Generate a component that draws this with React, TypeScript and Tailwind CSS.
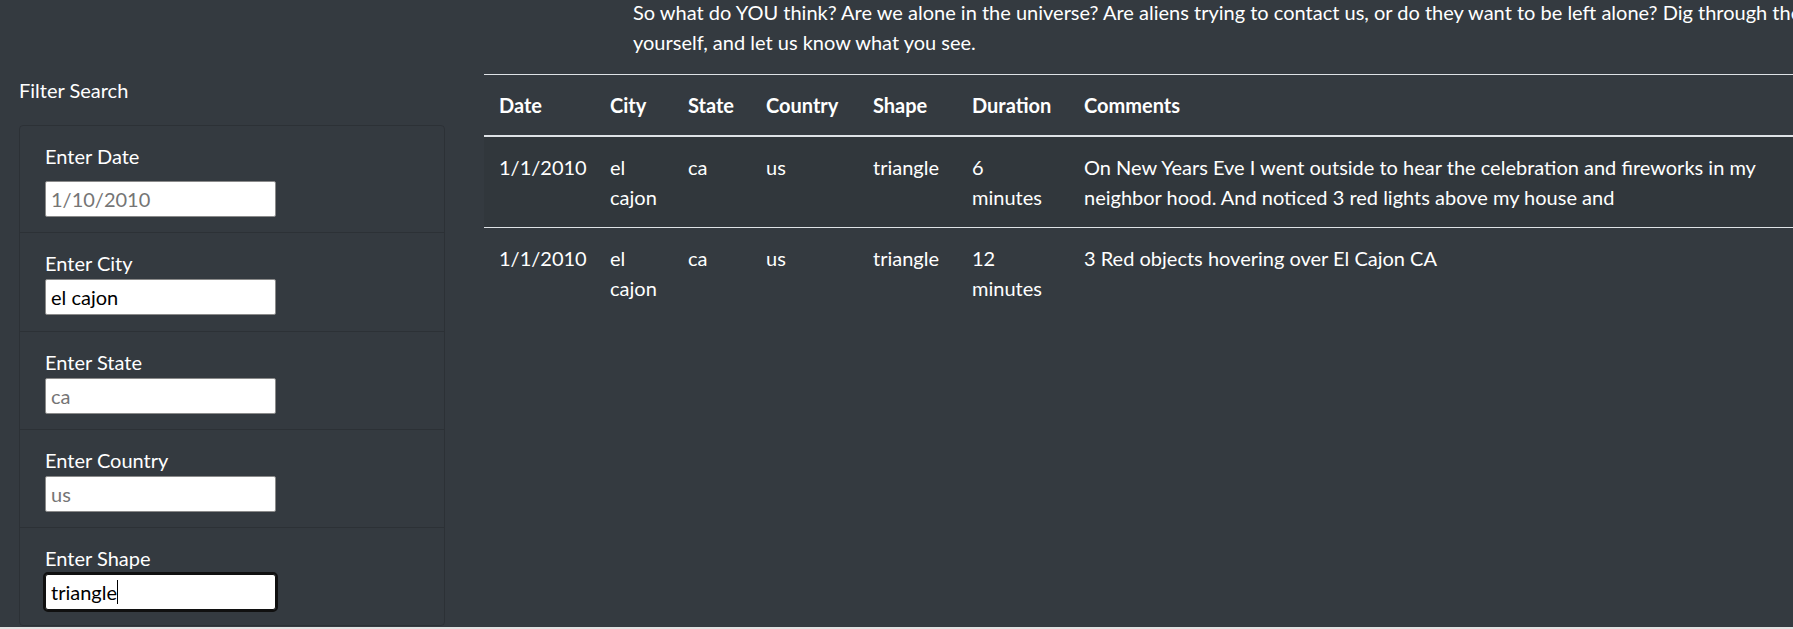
import { useState } from "react";

type Sighting = {
  date: string;
  city: string[];
  state: string;
  country: string;
  shape: string;
  duration: string[];
  comments: string[];
};

// the two rows that match the current filter
const sightings: Sighting[] = [
  {
    date: "1/1/2010",
    city: ["el", "cajon"],
    state: "ca",
    country: "us",
    shape: "triangle",
    duration: ["6", "minutes"],
    comments: [
      "On New Years Eve I went outside to hear the celebration and fireworks in my",
      "neighbor hood. And noticed 3 red lights above my house and",
    ],
  },
  {
    date: "1/1/2010",
    city: ["el", "cajon"],
    state: "ca",
    country: "us",
    shape: "triangle",
    duration: ["12", "minutes"],
    comments: ["3 Red objects hovering over El Cajon CA"],
  },
];

function Lines({ parts }: { parts: string[] }) {
  return (
    <>
      {parts.map((p, i) => (
        <div key={i}>{p}</div>
      ))}
    </>
  );
}

const inputClass =
  "block w-[231px] h-[36px] bg-white border border-[#8a8a8a] rounded-[2px] px-[5px] text-[20px] text-black placeholder:text-[#757575] focus:outline-none";

function App() {
  const [city, setCity] = useState("el cajon");

  return (
    <div
      className="w-[1793px] h-[629px] overflow-hidden bg-[#343a40] text-white text-[20px] leading-[30px] flex flex-col"
      style={{ fontFamily: "Lato, 'Open Sans', sans-serif" }}
    >
      <div className="flex flex-1 min-h-0 overflow-hidden">
        {/* left side filter list */}
        <div className="w-[470px] shrink-0 pl-[19px] pr-[25px] pt-[75px]">
          <div>Filter Search</div>
          <div className="mt-[20px] border border-black/15 rounded-[4px]">
            <div className="px-[25px] py-[15px]">
              <label className="block mb-[10px]">Enter Date</label>
              <input className={inputClass} placeholder="1/10/2010" />
            </div>
            <div className="border-t border-black/15 px-[25px] pt-[15px] pb-[16px]">
              <div>Enter City</div>
              <input
                className={inputClass + " mt-px"}
                value={city}
                onChange={(e) => setCity(e.target.value)}
              />
            </div>
            <div className="border-t border-black/15 px-[25px] pt-[15px] pb-[15px]">
              <div>Enter State</div>
              <input className={inputClass + " mt-px"} placeholder="ca" />
            </div>
            <div className="border-t border-black/15 px-[25px] pt-[15px] pb-[15px]">
              <div>Enter Country</div>
              <input className={inputClass + " mt-px"} placeholder="us" />
            </div>
            <div className="border-t border-black/15 px-[25px] pt-[15px] pb-[15px]">
              <div>Enter Shape</div>
              {/* focused field with the caret after the text */}
              <div className="mt-px w-[231px] h-[36px] bg-white border border-[#101010] outline-2 outline-[#101010] rounded-[3px] px-[5px] text-black flex items-center">
                <span>triangle</span>
                <span className="inline-block w-px h-[24px] bg-black" />
              </div>
            </div>
          </div>
        </div>

        {/* right side text and table */}
        <div className="flex-1 min-w-0 pl-[14px]">
          <div className="ml-[149px] mt-[-3px] whitespace-nowrap">
            <div>
              So what do YOU think? Are we alone in the universe? Are aliens trying to contact us, or do they want to be left alone? Dig through the data
            </div>
            <div>yourself, and let us know what you see.</div>
          </div>

          <table className="mt-[17px] w-[1330px] table-fixed border-collapse text-left">
            <colgroup>
              <col className="w-[111px]" />
              <col className="w-[78px]" />
              <col className="w-[78px]" />
              <col className="w-[107px]" />
              <col className="w-[99px]" />
              <col className="w-[112px]" />
              <col />
            </colgroup>
            <thead>
              <tr className="border-t border-[#dee2e6] border-b-2">
                {["Date", "City", "State", "Country", "Shape", "Duration", "Comments"].map((h) => (
                  <th key={h} className="px-[15px] py-[15px] font-bold whitespace-nowrap">
                    {h}
                  </th>
                ))}
              </tr>
            </thead>
            <tbody>
              {sightings.map((s, i) => (
                <tr
                  key={i}
                  className={
                    "align-top whitespace-nowrap " +
                    (i > 0 ? "border-t border-[#dee2e6] " : "") +
                    (i % 2 === 0 ? "bg-black/5" : "")
                  }
                >
                  <td className="px-[15px] py-[15px]">{s.date}</td>
                  <td className="px-[15px] py-[15px]">
                    <Lines parts={s.city} />
                  </td>
                  <td className="px-[15px] py-[15px]">{s.state}</td>
                  <td className="px-[15px] py-[15px]">{s.country}</td>
                  <td className="px-[15px] py-[15px]">{s.shape}</td>
                  <td className="px-[15px] py-[15px]">
                    <Lines parts={s.duration} />
                  </td>
                  <td className="px-[15px] py-[15px]">
                    <Lines parts={s.comments} />
                  </td>
                </tr>
              ))}
            </tbody>
          </table>
        </div>
      </div>
      <div className="h-[2px] bg-[#e1e1e1]" />
    </div>
  );
}

export default App;
